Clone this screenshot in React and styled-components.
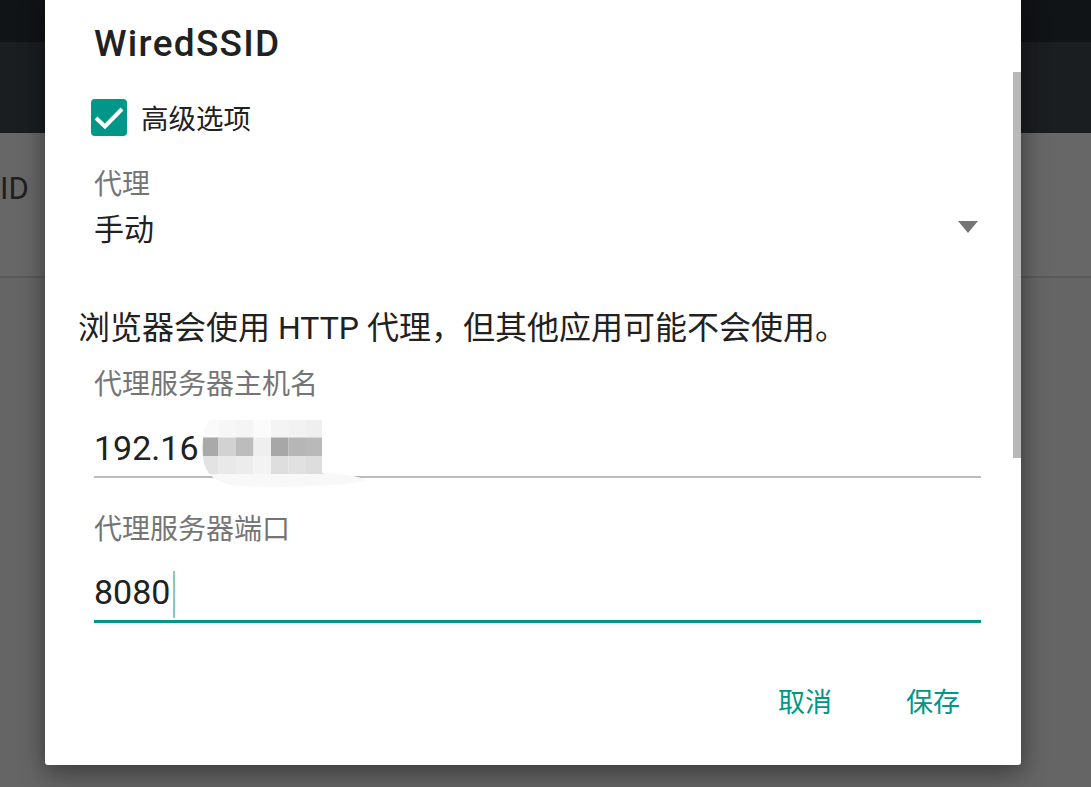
import React from 'react';
import styled, { createGlobalStyle } from 'styled-components';

const GlobalStyle = createGlobalStyle`
  html, body {
    margin: 0;
    padding: 0;
    background: #666666;
  }
  body {
    font-family: 'Roboto', 'Noto Sans CJK SC', sans-serif;
    overflow: hidden;
  }
`;

const TEAL = '#009688';
const FONT = `'Roboto', 'Noto Sans CJK SC', sans-serif`;

const Screen = styled.div`
  position: relative;
  width: 1091px;
  height: 787px;
  overflow: hidden;
  display: flex;
  flex-direction: column;
  background: #666666;
`;

const StatusBar = styled.div`
  height: 42px;
  background: #111416;
`;

const AppBar = styled.div`
  height: 91px;
  background: #1b1e21;
`;

const ListItem = styled.div`
  height: 145px;
  box-sizing: border-box;
  padding-top: 40px;
  background: #676767;
  border-bottom: 2px solid #5a5a5a;
  font-family: ${FONT};
  font-size: 31px;
  line-height: 32px;
  color: #1f1f1f;
`;

const ListRest = styled.div`
  flex: 1;
  background: #656565;
`;

const Dialog = styled.div`
  position: absolute;
  left: 45px;
  top: -10px;
  width: 976px;
  box-sizing: border-box;
  padding: 30px 40px 42px 49px;
  background: #ffffff;
  border-radius: 3px;
  box-shadow: 0 10px 28px rgba(0, 0, 0, 0.32), 0 0 18px rgba(0, 0, 0, 0.18);
  font-family: ${FONT};
  color: #212121;
  display: flex;
  flex-direction: column;
`;

const Scrollbar = styled.div`
  position: absolute;
  right: 0;
  top: 82px;
  width: 8px;
  height: 386px;
  background: #b8b8b8;
`;

const Title = styled.div`
  font-size: 37px;
  font-weight: 500;
  line-height: 48px;
  color: #212121;
  letter-spacing: 1.3px;
`;

const CheckRow = styled.label`
  margin-top: 29px;
  margin-left: -3px;
  height: 40px;
  display: flex;
  align-items: center;
  gap: 14px;
  font-size: 27.5px;
  color: #212121;
`;

const CheckBox = styled.span`
  width: 36px;
  height: 37px;
  border-radius: 4px;
  background: ${TEAL};
  display: flex;
  align-items: center;
  justify-content: center;
`;

const FieldLabel = styled.div`
  margin-top: ${p => p.$mt}px;
  font-size: 28px;
  line-height: 32px;
  color: #757575;
`;

const SelectRow = styled.div`
  margin-top: 6px;
  height: 40px;
  display: flex;
  align-items: center;
  justify-content: space-between;
  font-size: 30px;
  color: #212121;
`;

const Caret = styled.span`
  width: 0;
  height: 0;
  margin-right: 3px;
  border-left: 10px solid transparent;
  border-right: 10px solid transparent;
  border-top: 12px solid #757575;
`;

const Note = styled.p`
  margin: 61px 0 0 -16px;
  font-size: 32px;
  line-height: 40px;
  color: #212121;
  white-space: nowrap;
`;

const Input = styled.div`
  position: relative;
  margin-top: ${p => p.$mt}px;
  height: 44px;
  padding-bottom: 6px;
  border-bottom: ${p => (p.$focused ? `3px solid ${TEAL}` : '2px solid #bdbdbd')};
  font-size: 34px;
  line-height: 44px;
  color: #212121;
  display: flex;
  align-items: center;
`;

const Cursor = styled.span`
  width: 2px;
  height: 47px;
  margin-left: 3px;
  margin-top: 4px;
  background: #80cbc4;
`;

const Mosaic = styled.svg`
  position: absolute;
  left: 107px;
  top: -8px;
`;

const Footer = styled.div`
  margin-top: 60px;
  margin-right: 5px;
  display: flex;
  justify-content: flex-end;
  gap: 42px;
`;

const TextButton = styled.button`
  border: none;
  background: none;
  padding: 0 16px;
  font-family: ${FONT};
  font-size: 27px;
  line-height: 40px;
  font-weight: 400;
  color: ${TEAL};
`;

const mosaicRows = [
  ['#fafafa', '#f7f7f7', '#f5f5f5', '#fbfbfb', '#f4f4f4', '#f2f2f2', '#efefef'],
  ['#a9a9a9', '#d2d2d2', '#bcbcbc', '#efefef', '#a7a7a7', '#b6b6b6', '#b9b9b9'],
  ['#e3e3e3', '#e9e9e9', '#ececec', '#f3f3f3', '#dedede', '#e1e1e1', '#dddddd'],
];

function BlurPatch() {
  return (
    <Mosaic width="170" height="70" viewBox="0 0 170 70">
      <defs>
        <clipPath id="blob">
          <path d="M10 2 H121 V55 Q150 56 165 62 Q140 70 40 68 Q5 66 2 40 Q0 8 10 2 Z" />
        </clipPath>
      </defs>
      <g clipPath="url(#blob)">
        <rect x="0" y="0" width="170" height="70" fill="#f9f9f9" />
        {mosaicRows.map((row, r) =>
          row.map((c, i) => (
            <rect key={r + '-' + i} x={i * 17.5} y={1 + r * 18.5} width="17.5" height="18.5" fill={c} />
          ))
        )}
        <rect x="0" y="56" width="170" height="14" fill="#f8f8f8" />
      </g>
    </Mosaic>
  );
}

export default function App() {
  return (
    <>
      <GlobalStyle />
      <Screen>
        <StatusBar />
        <AppBar />
        <ListItem>ID</ListItem>
        <ListRest />

        <Dialog>
          <Scrollbar />
          <Title>WiredSSID</Title>
          <CheckRow>
            <CheckBox>
              <svg width="36" height="37" viewBox="0 0 36 37">
                <path d="M5 19 L14 27.5 L31 10" fill="none" stroke="#fff" strokeWidth="4" />
              </svg>
            </CheckBox>
            高级选项
          </CheckRow>

          <FieldLabel $mt={32}>代理</FieldLabel>
          <SelectRow>
            <span>手动</span>
            <Caret />
          </SelectRow>

          <Note>浏览器会使用 HTTP 代理，但其他应用可能不会使用。</Note>

          <FieldLabel $mt={21}>代理服务器主机名</FieldLabel>
          <Input $mt={25}>
            192.16
            <BlurPatch />
          </Input>

          <FieldLabel $mt={36}>代理服务器端口</FieldLabel>
          <Input $mt={24} $focused>
            8080
            <Cursor />
          </Input>

          <Footer>
            <TextButton>取消</TextButton>
            <TextButton>保存</TextButton>
          </Footer>
        </Dialog>
      </Screen>
    </>
  );
}
